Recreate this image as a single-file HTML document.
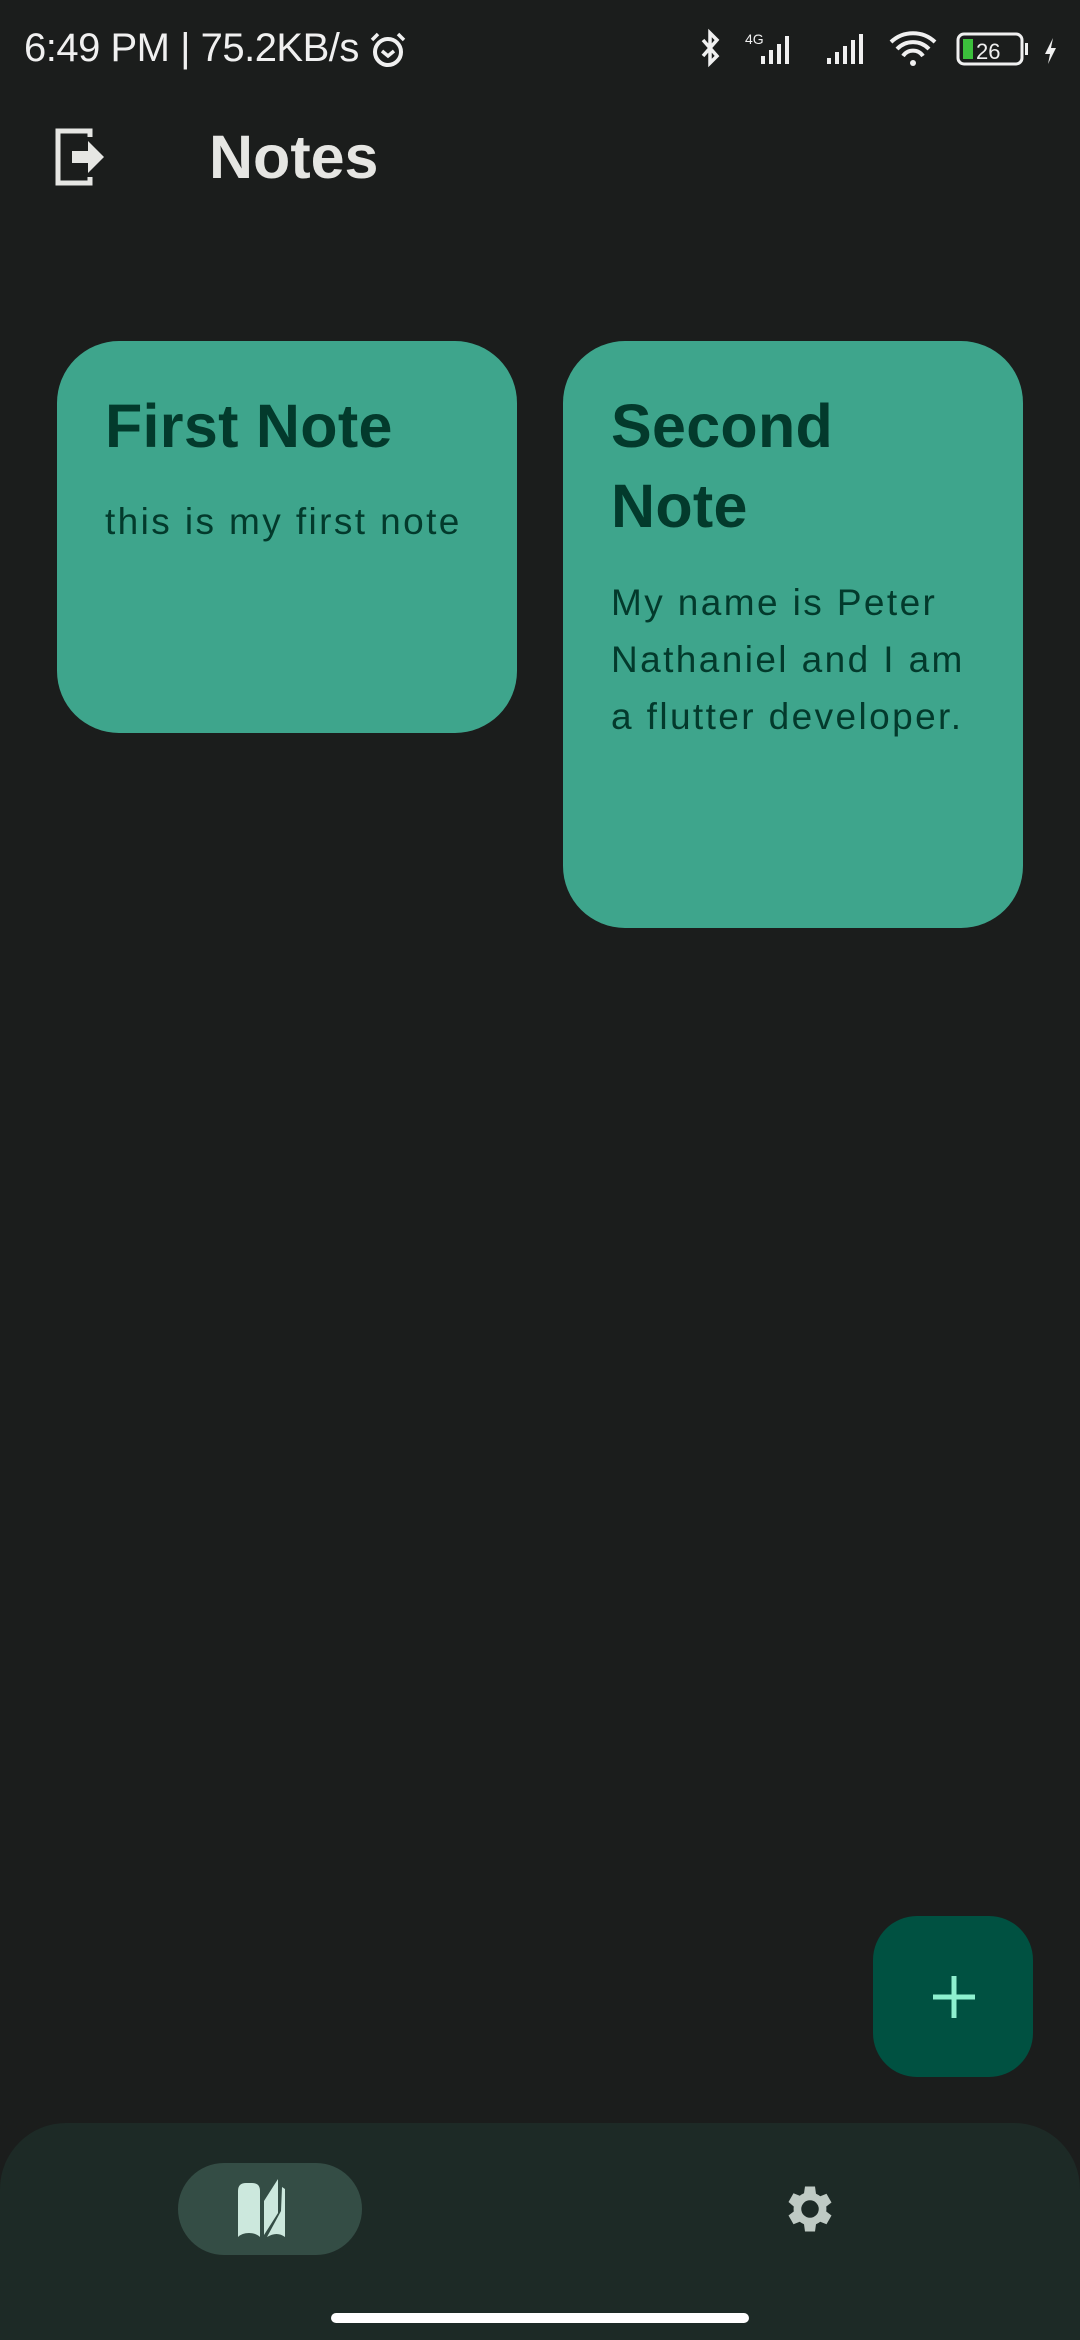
<!DOCTYPE html>
<html><head><meta charset="utf-8"><style>
*{margin:0;padding:0;box-sizing:border-box}
body{width:1080px;height:2340px;background:#1b1d1c;position:relative;overflow:hidden;font-family:"Liberation Sans",sans-serif}
.abs{position:absolute}
.st{color:#f0f0f0;font-size:40px;top:26px;left:24px;letter-spacing:-0.5px}
.title{left:209px;top:122px;font-size:61px;font-weight:bold;color:#e6e6e3}
.card{position:absolute;background:#3ea58c;border-radius:62px;color:#033a2c}
.card h2{position:absolute;left:48px;font-size:61px;font-weight:bold;line-height:80px;letter-spacing:0.3px}
.card p{position:absolute;left:48px;font-size:37px;line-height:57px;letter-spacing:2.4px}
</style></head><body>
<div class="abs st">6:49 PM | 75.2KB/s</div>
<svg class="abs" style="left:368px;top:30px" width="40" height="40" viewBox="0 0 40 40"><circle cx="20" cy="22" r="13" fill="none" stroke="#f0f0f0" stroke-width="4"/><path d="M14 21l6 5 6-5" fill="none" stroke="#f0f0f0" stroke-width="3.5"/><path d="M4 10l6-6M36 10l-6-6" stroke="#f0f0f0" stroke-width="3.5"/></svg>
<svg class="abs" style="left:695px;top:28px" width="380" height="44" viewBox="0 0 380 44">
<path d="M8 12l14 16-7 7V5l7 7L8 28" fill="none" stroke="#f0f0f0" stroke-width="3.5"/>
<text x="50" y="16" font-size="14" fill="#f0f0f0" font-family="Liberation Sans">4G</text>
<rect x="66" y="28" width="4" height="8" fill="#f0f0f0"/><rect x="74" y="22" width="4" height="14" fill="#f0f0f0"/><rect x="82" y="16" width="4" height="20" fill="#f0f0f0"/><rect x="90" y="8" width="4" height="28" fill="#f0f0f0"/>
<rect x="132" y="30" width="4" height="6" fill="#f0f0f0"/><rect x="140" y="24" width="4" height="12" fill="#f0f0f0"/><rect x="148" y="18" width="4" height="18" fill="#f0f0f0"/><rect x="156" y="12" width="4" height="24" fill="#f0f0f0"/><rect x="164" y="6" width="4" height="30" fill="#f0f0f0"/>
<path d="M196 14a32 32 0 0 1 44 0M202 21a22 22 0 0 1 32 0M208 28a12 12 0 0 1 20 0" fill="none" stroke="#f0f0f0" stroke-width="4"/><circle cx="218" cy="35" r="3" fill="#f0f0f0"/>
<rect x="263" y="6" width="64" height="30" rx="6" fill="none" stroke="#f0f0f0" stroke-width="3"/><rect x="268" y="11" width="10" height="20" fill="#3cc03c"/><text x="281" y="31" font-size="22" fill="#f0f0f0" font-family="Liberation Sans">26</text><rect x="330" y="15" width="3" height="12" fill="#f0f0f0"/>
<path d="M350 26l8-16-2 10h5l-8 16 2-10z" fill="#f0f0f0"/>
</svg>
<svg class="abs" style="left:54px;top:127px" width="54" height="60" viewBox="0 0 54 60"><path d="M36 10V4H4v52h32v-6" fill="none" stroke="#e6e6e3" stroke-width="5"/><path d="M18 24h16v-10l16 16-16 16V36H18z" fill="#e6e6e3"/></svg>
<div class="abs title">Notes</div>
<div class="card" style="left:57px;top:341px;width:460px;height:392px">
<h2 style="top:45px">First Note</h2>
<p style="top:152px">this is my first note</p>
</div>
<div class="card" style="left:563px;top:341px;width:460px;height:587px">
<h2 style="top:45px">Second<br>Note</h2>
<p style="top:233px">My name is Peter<br>Nathaniel and I am<br>a flutter developer.</p>
</div>
<div class="abs" style="left:873px;top:1916px;width:160px;height:161px;border-radius:44px;background:#005141"></div>
<svg class="abs" style="left:933px;top:1976px" width="42" height="42" viewBox="0 0 42 42"><path d="M21 0v42M0 21h42" stroke="#8ef0cf" stroke-width="5"/></svg>
<div class="abs" style="left:0;top:2123px;width:1080px;height:217px;background:#1d2a26;border-radius:66px 66px 0 0"></div>
<div class="abs" style="left:178px;top:2163px;width:184px;height:92px;border-radius:46px;background:#344d45"></div>
<svg class="abs" style="left:236px;top:2179px" width="70" height="62" viewBox="0 0 70 62"><path d="M2 12q0-8 8-8h6q8 0 8 8v46q-4-4-11-4t-11 4z" fill="#cce8dd"/><path d="M28 56V22L42 0v34z" fill="#cce8dd"/><path d="M46 8l3 2v48q-8-6-18 0l14-26z" fill="#cce8dd"/></svg>
<svg class="abs" style="left:780px;top:2179px" width="60" height="60" viewBox="0 0 24 24"><path fill="#bfcac4" d="M19.4 13a7.5 7.5 0 0 0 0-2l2.1-1.6-2-3.5-2.5 1a7.3 7.3 0 0 0-1.7-1L14.9 3h-4l-.4 2.7a7.3 7.3 0 0 0-1.7 1l-2.5-1-2 3.5L6.4 11a7.5 7.5 0 0 0 0 2l-2.1 1.6 2 3.5 2.5-1a7.3 7.3 0 0 0 1.7 1l.4 2.9h4l.4-2.9a7.3 7.3 0 0 0 1.7-1l2.5 1 2-3.5zM12.9 15.5a3.5 3.5 0 1 1 0-7 3.5 3.5 0 0 1 0 7z" transform="translate(-0.9 0)"/></svg>
<div class="abs" style="left:331px;top:2313px;width:418px;height:10px;border-radius:5px;background:#fff"></div>
</body></html>
